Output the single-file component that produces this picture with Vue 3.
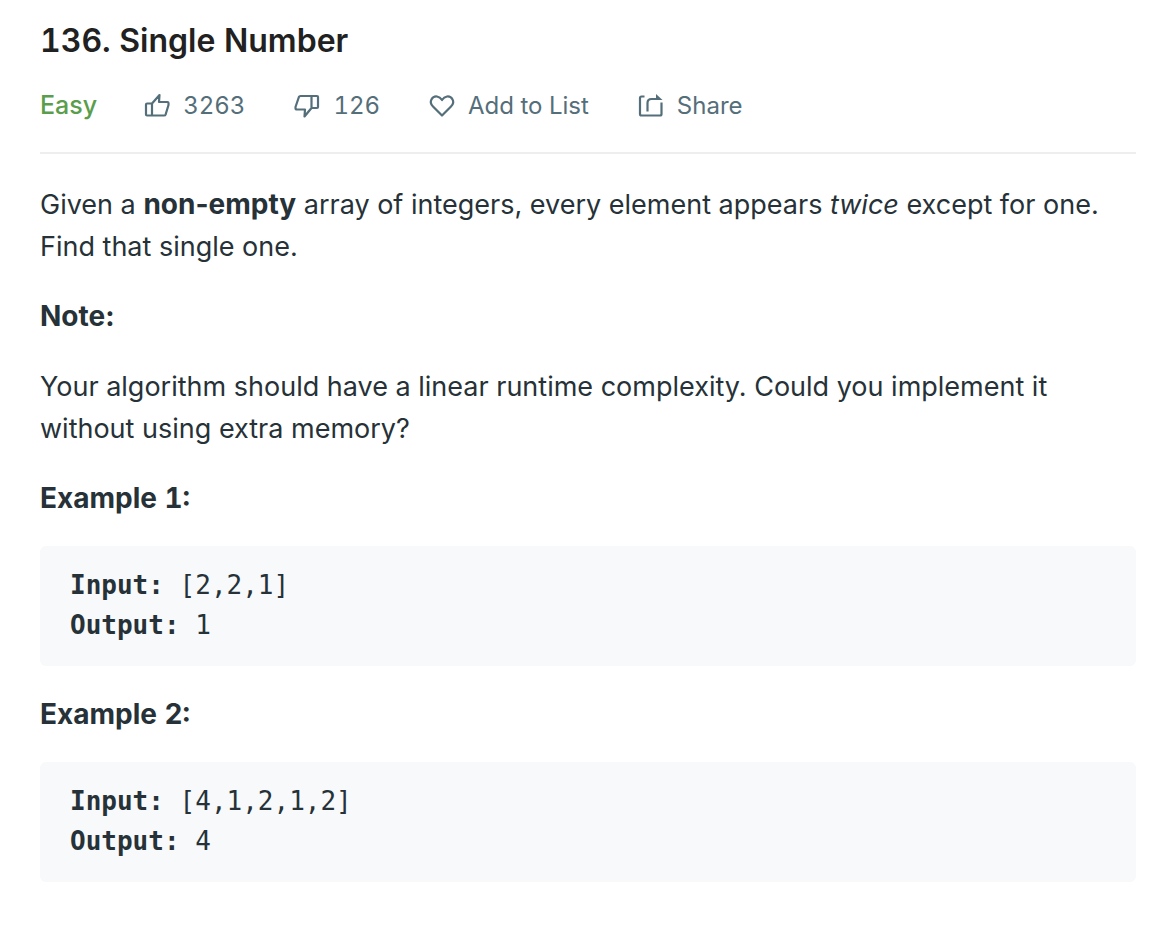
<script setup>
const examples = [
  { id: 1, input: '[2,2,1]', output: '1' },
  { id: 2, input: '[4,1,2,1,2]', output: '4' }
]
</script>

<template>
  <main class="problem">
    <h1>136. Single Number</h1>
    <div class="meta">
      <span class="level">Easy</span>
      <button type="button" class="up">
        <svg viewBox="0 0 26 26"><path d="M8 11.500H3Q2 11.500 2 12.500V22.500Q2 23.500 3 23.500H20Q21.300 23.500 21.700 22.300L24.500 13V11Q24.500 10 23.500 10H15L15.500 3L8 11.500V23.500" /></svg>3263
      </button>
      <button type="button" class="down">
        <svg viewBox="0 0 26 26"><path d="M17.500 16H23Q24 16 24 15V5Q24 4 23 4H6.500Q5.300 4 4.900 5L1.500 15V16Q1.500 17.500 3 17.500H11L10.500 24.500L17.500 16V4" /></svg>126
      </button>
      <button type="button" class="list">
        <svg viewBox="0 0 26 26"><path d="M13 23.500L4 14.500C-1 9.500 3.500 4 8 4.500Q11 5 13 8Q15 5 18 4.500C22.500 4 27 9.500 22 14.500Z" /></svg>Add to List
      </button>
      <button type="button" class="share">
        <svg viewBox="0 0 26 26"><path d="M6.500 4.500H3.500Q2 4.500 2 6V22Q2 23.500 3.500 23.500H22Q23.500 23.500 23.500 22V10.500M9.500 19.500V11Q9.500 7 13.500 7H20" /><path class="solid" d="M18 2L24.500 8H18z" /></svg>Share
      </button>
    </div>
    <section class="content">
      <p>Given a <strong>non-empty</strong> array of integers, every element appears <em>twice</em> except for one. Find that single one.</p>
      <p><strong>Note:</strong></p>
      <p>Your algorithm should have a linear runtime complexity. Could you implement it without using extra memory?</p>
      <template v-for="e in examples" :key="e.id">
        <p class="example"><strong>Example {{ e.id }}:</strong></p>
        <pre><strong>Input:</strong> {{ e.input }}
<strong>Output:</strong> {{ e.output }}</pre>
      </template>
    </section>
  </main>
</template>

<style>
body { margin: 0; background: #fff; }
</style>
<style scoped>
.problem { padding: 20px 40px; font-family: Inter, "Liberation Sans", sans-serif; color: #263238; }
h1 { margin: 0; font-size: 32px; line-height: 42px; font-weight: 600; color: #212121; }
h1, button, .example { font-variant-numeric: tabular-nums; }
.meta { display: flex; align-items: center; height: 46px; padding: 20px 0 24px; border-bottom: 2px solid #eee; font-size: 24px; color: #546e7a; }
.level { color: #5a9e4b; font-size: 25px; font-weight: 500; }
button { display: flex; align-items: center; gap: 13px; padding: 0; border: 0; background: none; font-family: inherit; font-size: inherit; color: inherit; cursor: pointer; }
svg { width: 26px; height: 26px; fill: none; stroke: currentColor; stroke-width: 2.2; stroke-linejoin: round; overflow: visible; }
.solid { fill: currentColor; stroke: none; }
.up { margin-left: 47px; }
.down, .list, .share { margin-left: 49px; }
.content { padding-top: 30px; }
p { margin: 0 0 28px; font-size: 27px; line-height: 42px; }
p strong { font-size: 28px; line-height: 30px; }
.example { margin-bottom: 26px; }
pre { margin: 0 0 28px; padding: 19px 30px 21px; border-radius: 6px; background: #f7f9fa; font: 26px/40px "DejaVu Sans Mono", monospace; }
</style>
